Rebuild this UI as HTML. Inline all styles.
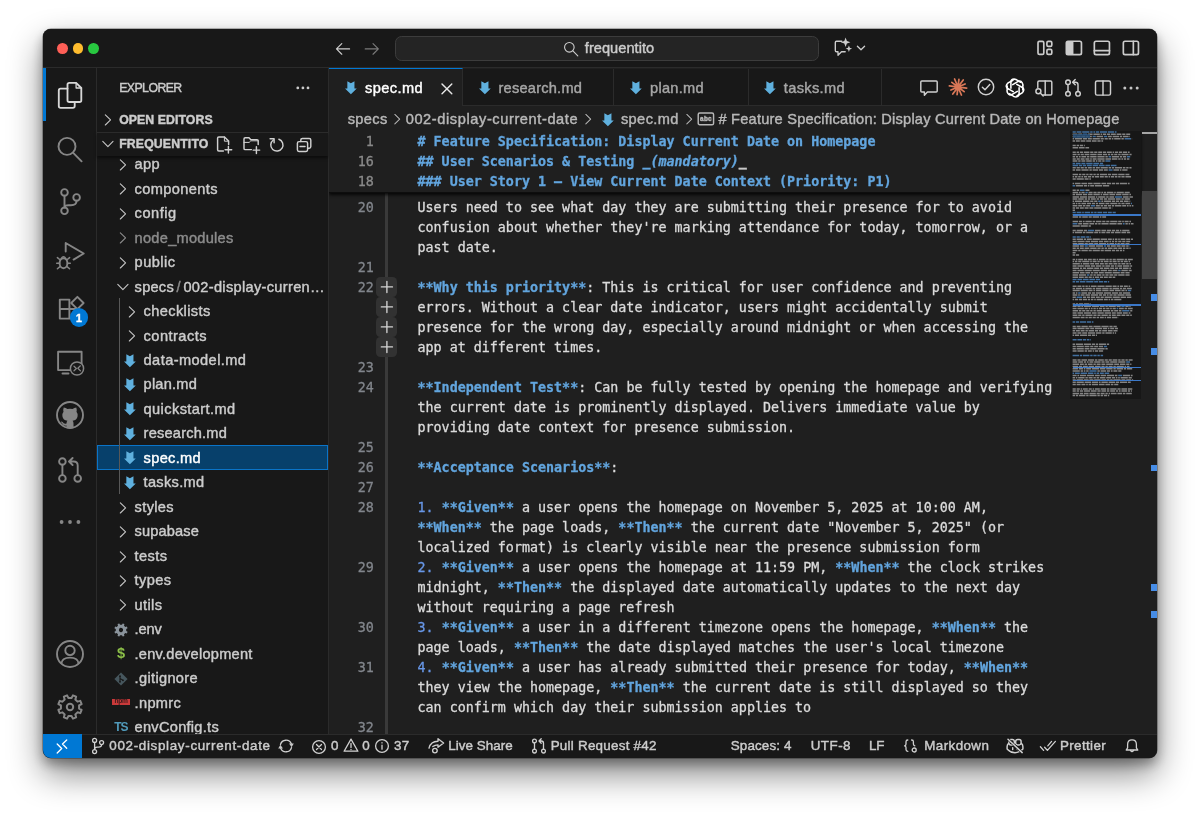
<!DOCTYPE html>
<html lang="en">
<head>
<meta charset="utf-8">
<title>spec.md — frequentito</title>
<style>
*{box-sizing:border-box;margin:0;padding:0}
html,body{width:1200px;height:816px;overflow:hidden;background:#fff}
body{font-family:"Liberation Sans",sans-serif;color:#ccc;position:relative}
#win{will-change:transform;position:absolute;left:43px;top:29px;width:1113.7px;height:729.4px;background:#1f1f1f;border-radius:8px;overflow:hidden;
  box-shadow:0 0 0 .5px rgba(0,0,0,.5),0 16px 34px rgba(0,0,0,.48),0 6px 12px rgba(0,0,0,.33)}
.t{position:absolute;white-space:pre;color:#ccc;-webkit-text-stroke:.42px}
.bx{position:absolute}
.ic{position:absolute;overflow:visible}
.m{font-family:"DejaVu Sans Mono","Liberation Mono",monospace;-webkit-text-stroke:.3px}
.clip{position:absolute;overflow:hidden}
b{font-weight:bold}
.hb{color:#62a5de;font-weight:bold}
.hbi{color:#62a5de;font-weight:bold;font-style:italic}
.nm{color:#6796e6}
.hu{color:#c8c8c8;font-weight:bold}

</style>
</head>
<body>
<div id="win">
<div class="bx" style="left:0.00px;top:0.00px;width:1113.70px;height:38.50px;background:#181818;border-bottom:1px solid #2b2b2b"></div>
<div class="bx" style="left:14.10px;top:14.30px;width:10.80px;height:10.80px;background:#fe5f57;border-radius:50%"></div>
<div class="bx" style="left:29.60px;top:14.30px;width:10.80px;height:10.80px;background:#febc2e;border-radius:50%"></div>
<div class="bx" style="left:45.20px;top:14.30px;width:10.80px;height:10.80px;background:#28c840;border-radius:50%"></div>
<svg class="ic" style="left:290.60px;top:10.80px" width="17.8" height="17.8" viewBox="0 0 16 16" fill="none" stroke="#ccc" stroke-width="1.05" stroke-linecap="round" stroke-linejoin="round"><path d="M14 8 H2.4 M7 3.2 L2.2 8 L7 12.8"/></svg>
<svg class="ic" style="left:319.80px;top:10.80px" width="17.8" height="17.8" viewBox="0 0 16 16" fill="none" stroke="#7a7a7a" stroke-width="1.05" stroke-linecap="round" stroke-linejoin="round"><path d="M2 8 H13.6 M9 3.2 L13.8 8 L9 12.8"/></svg>
<div class="bx" style="left:352.00px;top:6.70px;width:424.30px;height:25.60px;background:#242424;border:1px solid #3c3c3c;border-radius:6.5px"></div>
<svg class="ic" style="left:519.30px;top:10.60px" width="17.8" height="17.8" viewBox="0 0 16 16" fill="none" stroke="#ccc" stroke-width="1.0" stroke-linecap="round" stroke-linejoin="round"><circle cx="6.6" cy="6.6" r="4.3"/><path d="M9.8 9.8 L14.2 14.2"/></svg>
<span class="t" style="left:541.80px;top:9.03px;font-size:14.6px;line-height:20px;height:20px;letter-spacing:0.040px;color:#ccc;">frequentito</span>
<svg class="ic" style="left:780.20px;top:-0.70px" width="40" height="40" viewBox="-20 -20 40 40" fill="none" stroke="#ccc" stroke-width="1.35" stroke-linecap="round" stroke-linejoin="round"><path d="M-1.2 -6.8 H-6.5 Q-7.7 -6.8 -7.7 -5.6 V2.5 Q-7.7 3.7 -6.5 3.7 H-5 V7.2 L-1.5 3.7 H2.2"/><path stroke="none" fill="#ccc" d="M2.6 -10.6 L3.9 -7.1 L7.4 -5.8 L3.9 -4.5 L2.6 -1 L1.3 -4.5 L-2.2 -5.8 L1.3 -7.1 Z"/><path stroke="none" fill="#ccc" d="M5.9 -2.5 L6.8 -0.2 L9.1 0.7 L6.8 1.6 L5.9 3.9 L5 1.6 L2.7 0.7 L5 -0.2 Z"/></svg>
<svg class="ic" style="left:797.70px;top:-0.60px" width="40" height="40" viewBox="-20 -20 40 40" fill="none" stroke="#ccc" stroke-width="1.3" stroke-linecap="round" stroke-linejoin="round"><path d="M-3.6 -1.8 L0 1.8 L3.6 -1.8"/></svg>
<svg class="ic" style="left:992.90px;top:10.10px" width="17.8" height="17.8" viewBox="0 0 16 16" fill="none" stroke="#ccc" stroke-width="1.5" stroke-linecap="round" stroke-linejoin="round"><rect x="1.8" y="2.2" width="5.2" height="11.6" rx="1.2"/><rect x="9.8" y="2.2" width="4.4" height="4.4" rx="1.2"/><rect x="9.8" y="9.4" width="4.4" height="4.4" rx="1.2"/></svg>
<svg class="ic" style="left:1021.50px;top:10.10px" width="17.8" height="17.8" viewBox="0 0 16 16" fill="none" stroke="#ccc" stroke-width="1.5" stroke-linecap="round" stroke-linejoin="round"><rect x="1.2" y="2" width="13.6" height="12" rx="1.5"/><path stroke="none" fill="#ccc" d="M1.2 3.5 Q1.2 2 2.7 2 H7.6 V14 H2.7 Q1.2 14 1.2 12.5 Z"/></svg>
<svg class="ic" style="left:1050.30px;top:10.10px" width="17.8" height="17.8" viewBox="0 0 16 16" fill="none" stroke="#ccc" stroke-width="1.5" stroke-linecap="round" stroke-linejoin="round"><rect x="1.2" y="2" width="13.6" height="12" rx="1.5"/><path d="M1.2 10.5 H14.8"/></svg>
<svg class="ic" style="left:1079.00px;top:10.10px" width="17.8" height="17.8" viewBox="0 0 16 16" fill="none" stroke="#ccc" stroke-width="1.5" stroke-linecap="round" stroke-linejoin="round"><rect x="1.2" y="2" width="13.6" height="12" rx="1.5"/><path d="M10.2 2 V14"/></svg>
<div class="bx" style="left:0.00px;top:38.50px;width:53.80px;height:667.00px;background:#181818;border-right:1px solid #2b2b2b"></div>
<div class="bx" style="left:0.00px;top:39.00px;width:3.20px;height:53.30px;background:#0078d4"></div>
<svg class="ic" style="left:6.50px;top:45.70px" width="40" height="40" viewBox="-20 -20 40 40" fill="none" stroke="#d7d7d7" stroke-width="1.85" stroke-linecap="round" stroke-linejoin="round"><path d="M-2.5 -10.4 Q-2.5 -12.2 -0.7 -12.2 H6.1 L11.3 -7 V5.2 Q11.3 7 9.5 7 H-0.7 Q-2.5 7 -2.5 5.2 Z"/><path d="M6.1 -12.2 V-7 H11.3" stroke-width="1.3"/><path d="M-2.5 -6.4 H-9.4 Q-11.2 -6.4 -11.2 -4.6 V11 Q-11.2 12.8 -9.4 12.8 H2.9 Q4.7 12.8 4.7 11 V7"/></svg><svg class="ic" style="left:6.80px;top:99.50px" width="40" height="40" viewBox="-20 -20 40 40" fill="none" stroke="#868686" stroke-width="1.9" stroke-linecap="round" stroke-linejoin="round"><circle cx="-3" cy="-2.6" r="8.5"/><path d="M3.2 3.8 L11.6 12.3"/></svg><svg class="ic" style="left:6.80px;top:153.00px" width="40" height="40" viewBox="-20 -20 40 40" fill="none" stroke="#868686" stroke-width="1.9" stroke-linecap="round" stroke-linejoin="round"><circle cx="-5.5" cy="-9.6" r="3.3"/><circle cx="6.6" cy="-4.6" r="3.3"/><circle cx="-5.5" cy="8.8" r="3.3"/><path d="M-5.5 -6.3 V5.5 M6.6 -1.3 Q6.6 3.2 1 3.2 H-1.5 Q-5.5 3.2 -5.5 5.5"/></svg><svg class="ic" style="left:6.60px;top:206.50px" width="40" height="40" viewBox="-20 -20 40 40" fill="none" stroke="#868686" stroke-width="1.9" stroke-linecap="round" stroke-linejoin="round"><path d="M-4.3 -4.5 V-13 L13.7 -2.5 L3.6 3.6"/><ellipse cx="-6.5" cy="7.2" rx="3.9" ry="5"/><path d="M-10.4 7.2 H-13.3 M-2.6 7.2 H0.3 M-10 3.8 L-12.6 1.6 M-3 3.8 L-0.4 1.6 M-10 10.6 L-12.6 12.8 M-3 10.6 L-0.4 12.8 M-8.8 2.6 Q-6.5 -1 -4.2 2.6" stroke-width="1.5"/></svg><svg class="ic" style="left:6.60px;top:259.70px" width="40" height="40" viewBox="-20 -20 40 40" fill="none" stroke="#868686" stroke-width="1.9" stroke-linecap="round" stroke-linejoin="round"><path d="M-10.2 -9.4 H-0.6 V9.6 H-10.2 Z M-10.2 0 H-0.6 M-0.6 0 H9 V9.6 H-0.6"/><path d="M7.4 -12.2 L13.6 -6 L7.4 0.2 L1.2 -6 Z"/></svg><div class="bx" style="left:26.70px;top:279.40px;width:18.40px;height:18.40px;background:#0078d4;border-radius:50%"></div><span class="t" style="left:33.00px;top:282.82px;font-size:10.6px;line-height:12px;height:12px;font-weight:bold;color:#fff;">1</span><svg class="ic" style="left:6.60px;top:313.00px" width="40" height="40" viewBox="-20 -20 40 40" fill="none" stroke="#868686" stroke-width="1.9" stroke-linecap="round" stroke-linejoin="round"><path d="M-11.9 -10.3 H11.6 V8.1 H-11.9 Z M-7.5 11.5 H-1.5"/><circle cx="7" cy="6.5" r="6.6" fill="#181818" stroke-width="1.5"/><path d="M4 4.2 L6.4 6.5 L4 8.8 M10.4 3.8 L7.8 6.3 L10.4 8.8" stroke-width="1.2"/></svg><svg class="ic" style="left:7.00px;top:366.10px" width="40" height="40" viewBox="-20 -20 40 40" fill="none" stroke="#868686" stroke-width="1.9" stroke-linecap="round" stroke-linejoin="round"><circle cx="0" cy="0" r="13"/><path stroke="none" fill="#868686" d="M-6.3 -7.6 Q-4.2 -7.4 -2.6 -5.9 Q0 -6.5 2.6 -5.9 Q4.2 -7.4 6.3 -7.6 Q7.1 -5.2 6.5 -3.3 Q8 -1.4 7.6 1.2 Q6.9 5.2 2.6 5.7 Q3.6 6.8 3.5 8.6 V13.2 Q0 14 -3.5 13.2 V10.6 Q-6.6 11.3 -7.8 8.6 Q-8.4 7.3 -9.4 6.9 Q-8.6 6.3 -7.4 7 Q-6 9.3 -3.5 8.4 Q-3.4 6.6 -2.6 5.7 Q-6.9 5.2 -7.6 1.2 Q-8 -1.4 -6.5 -3.3 Q-7.1 -5.2 -6.3 -7.6 Z"/></svg><svg class="ic" style="left:6.80px;top:421.00px" width="40" height="40" viewBox="-20 -20 40 40" fill="none" stroke="#868686" stroke-width="1.9" stroke-linecap="round" stroke-linejoin="round"><circle cx="-7.6" cy="-8.5" r="3.3"/><circle cx="-7.6" cy="8.4" r="3.3"/><circle cx="7.7" cy="8.4" r="3.3"/><path d="M-7.6 -5.2 V5.1 M7.7 5.1 V-4.5 Q7.7 -8.5 3.7 -8.5 H-0.8 M2.6 -12 L-1 -8.5 L2.6 -5"/></svg><svg class="ic" style="left:7.00px;top:473.00px" width="40" height="40" viewBox="-20 -20 40 40" fill="none" stroke="#868686" stroke-width="1.9" stroke-linecap="round" stroke-linejoin="round"><g stroke="none" fill="#868686"><circle cx="-8.4" cy="0" r="1.9"/><circle cx="0" cy="0" r="1.9"/><circle cx="8.4" cy="0" r="1.9"/></g></svg><svg class="ic" style="left:7.00px;top:604.60px" width="40" height="40" viewBox="-20 -20 40 40" fill="none" stroke="#868686" stroke-width="1.9" stroke-linecap="round" stroke-linejoin="round"><circle cx="0" cy="0" r="13"/><circle cx="0" cy="-3.6" r="4.7"/><path d="M-8.6 9.4 Q-8 3.6 0 3.6 Q8 3.6 8.6 9.4"/></svg><svg class="ic" style="left:6.70px;top:657.90px" width="40" height="40" viewBox="-20 -20 40 40" fill="none" stroke="#868686" stroke-width="2.0" stroke-linecap="round" stroke-linejoin="round"><path d="M8.97 -2.06 L11.87 -1.73 L11.87 1.73 L8.97 2.06 L7.80 4.88 L9.62 7.17 L7.17 9.62 L4.88 7.80 L2.06 8.97 L1.73 11.87 L-1.73 11.87 L-2.06 8.97 L-4.88 7.80 L-7.17 9.62 L-9.62 7.17 L-7.80 4.88 L-8.97 2.06 L-11.87 1.73 L-11.87 -1.73 L-8.97 -2.06 L-7.80 -4.88 L-9.62 -7.17 L-7.17 -9.62 L-4.88 -7.80 L-2.06 -8.97 L-1.73 -11.87 L1.73 -11.87 L2.06 -8.97 L4.88 -7.80 L7.17 -9.62 L9.62 -7.17 L7.80 -4.88 Z" transform="rotate(22.5)"/><circle cx="0" cy="0" r="3.2"/></svg>
<div class="bx" style="left:286.00px;top:39.50px;width:827.70px;height:37.80px;background:#181818;border-bottom:1px solid #2b2b2b"></div>
<div class="bx" style="left:286.00px;top:38.60px;width:134.00px;height:38.90px;background:#1f1f1f;border-top:1.4px solid #0078d4;border-right:1px solid #2b2b2b"></div>
<div class="bx" style="left:570.30px;top:39.50px;width:1.00px;height:37.00px;background:#2b2b2b"></div>
<div class="bx" style="left:704.90px;top:39.50px;width:1.00px;height:37.00px;background:#2b2b2b"></div>
<div class="bx" style="left:837.70px;top:39.50px;width:1.00px;height:37.00px;background:#2b2b2b"></div>
<svg class="ic" style="left:299.40px;top:50.00px" width="17.8" height="17.8" viewBox="0 0 16 16" fill="none" stroke="#ccc" stroke-width="1.0" stroke-linecap="round" stroke-linejoin="round"><path stroke="none" fill="#5fb0de" d="M4.8 2.1 L8 3.8 L11.2 2.1 V8.6 H13.3 L8 13.8 L2.7 8.6 H4.8 Z"/></svg>
<span class="t" style="left:322.00px;top:48.93px;font-size:14.6px;line-height:20px;height:20px;letter-spacing:0.407px;color:#fff;">spec.md</span>
<svg class="ic" style="left:395.20px;top:50.70px" width="17.8" height="17.8" viewBox="0 0 16 16" fill="none" stroke="#e6e6e6" stroke-width="1.3" stroke-linecap="round" stroke-linejoin="round"><path d="M3.6 3.6 L12.4 12.4 M12.4 3.6 L3.6 12.4"/></svg>
<svg class="ic" style="left:433.20px;top:50.00px" width="17.8" height="17.8" viewBox="0 0 16 16" fill="none" stroke="#ccc" stroke-width="1.0" stroke-linecap="round" stroke-linejoin="round"><path stroke="none" fill="#5fb0de" d="M4.8 2.1 L8 3.8 L11.2 2.1 V8.6 H13.3 L8 13.8 L2.7 8.6 H4.8 Z"/></svg>
<span class="t" style="left:455.50px;top:48.93px;font-size:14.6px;line-height:20px;height:20px;letter-spacing:0.227px;color:#a6a6a6;">research.md</span>
<svg class="ic" style="left:584.40px;top:50.00px" width="17.8" height="17.8" viewBox="0 0 16 16" fill="none" stroke="#ccc" stroke-width="1.0" stroke-linecap="round" stroke-linejoin="round"><path stroke="none" fill="#5fb0de" d="M4.8 2.1 L8 3.8 L11.2 2.1 V8.6 H13.3 L8 13.8 L2.7 8.6 H4.8 Z"/></svg>
<span class="t" style="left:607.00px;top:48.93px;font-size:14.6px;line-height:20px;height:20px;letter-spacing:0.283px;color:#a6a6a6;">plan.md</span>
<svg class="ic" style="left:718.30px;top:50.00px" width="17.8" height="17.8" viewBox="0 0 16 16" fill="none" stroke="#ccc" stroke-width="1.0" stroke-linecap="round" stroke-linejoin="round"><path stroke="none" fill="#5fb0de" d="M4.8 2.1 L8 3.8 L11.2 2.1 V8.6 H13.3 L8 13.8 L2.7 8.6 H4.8 Z"/></svg>
<span class="t" style="left:740.80px;top:48.93px;font-size:14.6px;line-height:20px;height:20px;letter-spacing:0.351px;color:#a6a6a6;">tasks.md</span>
<svg class="ic" style="left:865.70px;top:39.00px" width="40" height="40" viewBox="-20 -20 40 40" fill="none" stroke="#d0d0d0" stroke-width="1.45" stroke-linecap="round" stroke-linejoin="round"><path d="M-8.2 -6 Q-8.2 -7 -7.2 -7 H7.2 Q8.2 -7 8.2 -6 V3 Q8.2 4 7.2 4 H-1.6 L-4.6 7.2 V4 H-7.2 Q-8.2 4 -8.2 3 Z"/></svg><svg class="ic" style="left:895.00px;top:38.20px" width="40" height="40" viewBox="-20 -20 40 40" fill="none" stroke="#d97757" stroke-width="1.75" stroke-linecap="round" stroke-linejoin="round"><path d="M1.19 0.14 L8.64 1.04 M0.96 0.72 L6.16 4.62 M0.47 1.10 L3.42 8.00 M-0.14 1.19 L-0.92 7.64 M-0.72 0.96 L-5.22 6.96 M-1.10 0.47 L-7.08 3.02 M-1.19 -0.14 L-8.64 -1.04 M-0.96 -0.72 L-6.16 -4.62 M-0.47 -1.10 L-3.42 -8.00 M0.14 -1.19 L0.92 -7.64 M0.72 -0.96 L5.22 -6.96 M1.10 -0.47 L7.08 -3.02 "/><circle cx="0" cy="0" r="2.2" fill="#d97757" stroke="none"/></svg><svg class="ic" style="left:923.30px;top:38.30px" width="40" height="40" viewBox="-20 -20 40 40" fill="none" stroke="#d0d0d0" stroke-width="1.45" stroke-linecap="round" stroke-linejoin="round"><circle cx="0" cy="0" r="7.7"/><path d="M-3.6 0.2 L-1 2.8 L3.8 -2.4"/></svg><svg class="ic" style="left:952.40px;top:38.50px" width="40" height="40" viewBox="-20 -20 40 40" fill="none" stroke="#fff" stroke-width="1.55" stroke-linecap="round" stroke-linejoin="round"><path transform="rotate(0)" d="M-4.1 0.3 V-5.6 Q-4.1 -8.9 -0.9 -8.9 Q1.2 -8.9 2.6 -7.5 L5.7 -5.7"/><path transform="rotate(60)" d="M-4.1 0.3 V-5.6 Q-4.1 -8.9 -0.9 -8.9 Q1.2 -8.9 2.6 -7.5 L5.7 -5.7"/><path transform="rotate(120)" d="M-4.1 0.3 V-5.6 Q-4.1 -8.9 -0.9 -8.9 Q1.2 -8.9 2.6 -7.5 L5.7 -5.7"/><path transform="rotate(180)" d="M-4.1 0.3 V-5.6 Q-4.1 -8.9 -0.9 -8.9 Q1.2 -8.9 2.6 -7.5 L5.7 -5.7"/><path transform="rotate(240)" d="M-4.1 0.3 V-5.6 Q-4.1 -8.9 -0.9 -8.9 Q1.2 -8.9 2.6 -7.5 L5.7 -5.7"/><path transform="rotate(300)" d="M-4.1 0.3 V-5.6 Q-4.1 -8.9 -0.9 -8.9 Q1.2 -8.9 2.6 -7.5 L5.7 -5.7"/></svg><svg class="ic" style="left:981.30px;top:39.00px" width="40" height="40" viewBox="-20 -20 40 40" fill="none" stroke="#d0d0d0" stroke-width="1.45" stroke-linecap="round" stroke-linejoin="round"><path d="M-6.2 -0.4 V-5.8 Q-6.2 -7 -5 -7 H6.6 Q7.8 -7 7.8 -5.8 V5.8 Q7.8 7 6.6 7 H-1.2"/><path d="M1.2 -7 V7"/><circle cx="-5.6" cy="3.2" r="2.5"/><path d="M-3.8 5 L-0.8 8"/></svg><svg class="ic" style="left:1010.00px;top:38.80px" width="40" height="40" viewBox="-20 -20 40 40" fill="none" stroke="#d0d0d0" stroke-width="1.45" stroke-linecap="round" stroke-linejoin="round"><circle cx="-5" cy="-5.8" r="2.3"/><circle cx="-5" cy="5.8" r="2.3"/><circle cx="5" cy="5.8" r="2.3"/><path d="M-5 -3.5 V3.5 M5 3.5 V-3.2 Q5 -5.8 2.4 -5.8 H0 M2.2 -8.4 L-0.4 -5.8 L2.2 -3.2"/></svg><svg class="ic" style="left:1040.00px;top:39.20px" width="40" height="40" viewBox="-20 -20 40 40" fill="none" stroke="#d0d0d0" stroke-width="1.45" stroke-linecap="round" stroke-linejoin="round"><rect x="-7.5" y="-7.1" width="15" height="14.2" rx="1.6"/><path d="M0 -7.1 V7.1"/></svg><svg class="ic" style="left:1068.30px;top:38.60px" width="40" height="40" viewBox="-20 -20 40 40" fill="none" stroke="#868686" stroke-width="1.9" stroke-linecap="round" stroke-linejoin="round"><g stroke="none" fill="#c5c5c5"><circle cx="-6.2" cy="0" r="1.5"/><circle cx="0" cy="0" r="1.5"/><circle cx="6.2" cy="0" r="1.5"/></g></svg>
<span class="t" style="left:304.70px;top:80.13px;font-size:14.6px;line-height:20px;height:20px;letter-spacing:0.375px;color:#b8b8b8;">specs</span>
<svg class="ic" style="left:345.70px;top:81.90px" width="16.4" height="16.4" viewBox="0 0 16 16" fill="none" stroke="#b8b8b8" stroke-width="1.0" stroke-linecap="round" stroke-linejoin="round"><path d="M5.7 3.4 L10.4 8 L5.7 12.6"/></svg>
<span class="t" style="left:362.70px;top:80.13px;font-size:14.6px;line-height:20px;height:20px;letter-spacing:0.597px;color:#b8b8b8;">002-display-current-date</span>
<svg class="ic" style="left:537.00px;top:81.90px" width="16.4" height="16.4" viewBox="0 0 16 16" fill="none" stroke="#b8b8b8" stroke-width="1.0" stroke-linecap="round" stroke-linejoin="round"><path d="M5.7 3.4 L10.4 8 L5.7 12.6"/></svg>
<svg class="ic" style="left:555.50px;top:81.60px" width="17.8" height="17.8" viewBox="0 0 16 16" fill="none" stroke="#ccc" stroke-width="1.0" stroke-linecap="round" stroke-linejoin="round"><path stroke="none" fill="#5fb0de" d="M4.8 2.1 L8 3.8 L11.2 2.1 V8.6 H13.3 L8 13.8 L2.7 8.6 H4.8 Z"/></svg>
<span class="t" style="left:577.90px;top:80.13px;font-size:14.6px;line-height:20px;height:20px;letter-spacing:0.407px;color:#b8b8b8;">spec.md</span>
<svg class="ic" style="left:637.60px;top:81.90px" width="16.4" height="16.4" viewBox="0 0 16 16" fill="none" stroke="#b8b8b8" stroke-width="1.0" stroke-linecap="round" stroke-linejoin="round"><path d="M5.7 3.4 L10.4 8 L5.7 12.6"/></svg>
<svg class="ic" style="left:654.10px;top:81.30px" width="17.8" height="17.8" viewBox="0 0 16 16" fill="none" stroke="#b8b8b8" stroke-width="1.3" stroke-linecap="round" stroke-linejoin="round"><rect x="1.1" y="2.7" width="13.8" height="10.6" rx="1.4"/></svg>
<span class="t" style="left:657.10px;top:84.54px;font-size:6.4px;line-height:10px;height:10px;letter-spacing:0.263px;font-weight:bold;color:#b8b8b8;">abc</span>
<span class="t" style="left:675.50px;top:80.13px;font-size:14.6px;line-height:20px;height:20px;letter-spacing:0.218px;color:#b8b8b8;"># Feature Specification: Display Current Date on Homepage</span>
<div class="bx" style="left:53.80px;top:38.50px;width:232.20px;height:667.00px;background:#181818;border-right:1px solid #2b2b2b"></div>
<span class="t" style="left:76.20px;top:49.14px;font-size:12.3px;line-height:20px;height:20px;letter-spacing:-0.559px;color:#ccc;">EXPLORER</span>
<svg class="ic" style="left:251.40px;top:50.10px" width="17.8" height="17.8" viewBox="0 0 16 16" fill="none" stroke="#ccc" stroke-width="1.0" stroke-linecap="round" stroke-linejoin="round"><g stroke="none" fill="#ccc"><circle cx="3.4" cy="8" r="1.25"/><circle cx="8" cy="8" r="1.25"/><circle cx="12.6" cy="8" r="1.25"/></g></svg>
<div class="clip" style="left:53.70px;top:127.30px;width:232.30px;height:578.20px"><div class="bx" style="left:0.20px;top:288.94px;width:231.40px;height:24.47px;background:#07406b;border:1px solid #0a74c8"></div><div class="bx" style="left:22.60px;top:142.02px;width:1.00px;height:195.76px;background:#585858"></div><svg class="ic" style="left:17.20px;top:-0.30px" width="17.8" height="17.8" viewBox="0 0 16 16" fill="none" stroke="#c5c5c5" stroke-width="1.0" stroke-linecap="round" stroke-linejoin="round"><path d="M5.7 3.4 L10.4 8 L5.7 12.6"/></svg><span class="t" style="left:37.90px;top:-4.07px;font-size:14.6px;line-height:24px;height:24px;letter-spacing:0.400px;color:#ccc;">app</span><svg class="ic" style="left:17.20px;top:24.17px" width="17.8" height="17.8" viewBox="0 0 16 16" fill="none" stroke="#c5c5c5" stroke-width="1.0" stroke-linecap="round" stroke-linejoin="round"><path d="M5.7 3.4 L10.4 8 L5.7 12.6"/></svg><span class="t" style="left:37.90px;top:20.40px;font-size:14.6px;line-height:24px;height:24px;letter-spacing:0.390px;color:#ccc;">components</span><svg class="ic" style="left:17.20px;top:48.64px" width="17.8" height="17.8" viewBox="0 0 16 16" fill="none" stroke="#c5c5c5" stroke-width="1.0" stroke-linecap="round" stroke-linejoin="round"><path d="M5.7 3.4 L10.4 8 L5.7 12.6"/></svg><span class="t" style="left:37.90px;top:44.87px;font-size:14.6px;line-height:24px;height:24px;letter-spacing:0.510px;color:#ccc;">config</span><svg class="ic" style="left:17.20px;top:73.11px" width="17.8" height="17.8" viewBox="0 0 16 16" fill="none" stroke="#8c8c8c" stroke-width="1.0" stroke-linecap="round" stroke-linejoin="round"><path d="M5.7 3.4 L10.4 8 L5.7 12.6"/></svg><span class="t" style="left:37.90px;top:69.34px;font-size:14.6px;line-height:24px;height:24px;letter-spacing:0.271px;color:#8c8c8c;">node_modules</span><svg class="ic" style="left:17.20px;top:97.58px" width="17.8" height="17.8" viewBox="0 0 16 16" fill="none" stroke="#c5c5c5" stroke-width="1.0" stroke-linecap="round" stroke-linejoin="round"><path d="M5.7 3.4 L10.4 8 L5.7 12.6"/></svg><span class="t" style="left:37.90px;top:93.81px;font-size:14.6px;line-height:24px;height:24px;letter-spacing:0.445px;color:#ccc;">public</span><svg class="ic" style="left:17.20px;top:122.05px" width="17.8" height="17.8" viewBox="0 0 16 16" fill="none" stroke="#c5c5c5" stroke-width="1.0" stroke-linecap="round" stroke-linejoin="round"><path d="M3.4 5.7 L8 10.4 L12.6 5.7"/></svg><span class="t" style="left:37.90px;top:118.28px;font-size:14.6px;line-height:24px;height:24px;letter-spacing:0.255px;color:#ccc;">specs</span><span class="t" style="left:79.90px;top:118.28px;font-size:14.6px;line-height:24px;height:24px;color:#8a8a8a;">/</span><span class="t" style="left:86.70px;top:118.28px;font-size:14.6px;line-height:24px;height:24px;letter-spacing:0.323px;color:#ccc;">002-display-curren…</span><svg class="ic" style="left:26.20px;top:146.52px" width="17.8" height="17.8" viewBox="0 0 16 16" fill="none" stroke="#c5c5c5" stroke-width="1.0" stroke-linecap="round" stroke-linejoin="round"><path d="M5.7 3.4 L10.4 8 L5.7 12.6"/></svg><span class="t" style="left:46.90px;top:142.75px;font-size:14.6px;line-height:24px;height:24px;letter-spacing:0.374px;color:#ccc;">checklists</span><svg class="ic" style="left:26.20px;top:170.99px" width="17.8" height="17.8" viewBox="0 0 16 16" fill="none" stroke="#c5c5c5" stroke-width="1.0" stroke-linecap="round" stroke-linejoin="round"><path d="M5.7 3.4 L10.4 8 L5.7 12.6"/></svg><span class="t" style="left:46.90px;top:167.22px;font-size:14.6px;line-height:24px;height:24px;letter-spacing:0.466px;color:#ccc;">contracts</span><svg class="ic" style="left:24.00px;top:195.26px" width="17.8" height="17.8" viewBox="0 0 16 16" fill="none" stroke="#ccc" stroke-width="1.0" stroke-linecap="round" stroke-linejoin="round"><path stroke="none" fill="#5fb0de" d="M4.8 2.1 L8 3.8 L11.2 2.1 V8.6 H13.3 L8 13.8 L2.7 8.6 H4.8 Z"/></svg><span class="t" style="left:46.90px;top:191.69px;font-size:14.6px;line-height:24px;height:24px;letter-spacing:0.420px;color:#ccc;">data-model.md</span><svg class="ic" style="left:24.00px;top:219.73px" width="17.8" height="17.8" viewBox="0 0 16 16" fill="none" stroke="#ccc" stroke-width="1.0" stroke-linecap="round" stroke-linejoin="round"><path stroke="none" fill="#5fb0de" d="M4.8 2.1 L8 3.8 L11.2 2.1 V8.6 H13.3 L8 13.8 L2.7 8.6 H4.8 Z"/></svg><span class="t" style="left:46.90px;top:216.16px;font-size:14.6px;line-height:24px;height:24px;letter-spacing:0.212px;color:#ccc;">plan.md</span><svg class="ic" style="left:24.00px;top:244.20px" width="17.8" height="17.8" viewBox="0 0 16 16" fill="none" stroke="#ccc" stroke-width="1.0" stroke-linecap="round" stroke-linejoin="round"><path stroke="none" fill="#5fb0de" d="M4.8 2.1 L8 3.8 L11.2 2.1 V8.6 H13.3 L8 13.8 L2.7 8.6 H4.8 Z"/></svg><span class="t" style="left:46.90px;top:240.63px;font-size:14.6px;line-height:24px;height:24px;letter-spacing:0.402px;color:#ccc;">quickstart.md</span><svg class="ic" style="left:24.00px;top:268.67px" width="17.8" height="17.8" viewBox="0 0 16 16" fill="none" stroke="#ccc" stroke-width="1.0" stroke-linecap="round" stroke-linejoin="round"><path stroke="none" fill="#5fb0de" d="M4.8 2.1 L8 3.8 L11.2 2.1 V8.6 H13.3 L8 13.8 L2.7 8.6 H4.8 Z"/></svg><span class="t" style="left:46.90px;top:265.10px;font-size:14.6px;line-height:24px;height:24px;letter-spacing:0.209px;color:#ccc;">research.md</span><svg class="ic" style="left:24.00px;top:293.14px" width="17.8" height="17.8" viewBox="0 0 16 16" fill="none" stroke="#ccc" stroke-width="1.0" stroke-linecap="round" stroke-linejoin="round"><path stroke="none" fill="#5fb0de" d="M4.8 2.1 L8 3.8 L11.2 2.1 V8.6 H13.3 L8 13.8 L2.7 8.6 H4.8 Z"/></svg><span class="t" style="left:46.90px;top:289.57px;font-size:14.6px;line-height:24px;height:24px;letter-spacing:0.321px;color:#fff;">spec.md</span><svg class="ic" style="left:24.00px;top:317.61px" width="17.8" height="17.8" viewBox="0 0 16 16" fill="none" stroke="#ccc" stroke-width="1.0" stroke-linecap="round" stroke-linejoin="round"><path stroke="none" fill="#5fb0de" d="M4.8 2.1 L8 3.8 L11.2 2.1 V8.6 H13.3 L8 13.8 L2.7 8.6 H4.8 Z"/></svg><span class="t" style="left:46.90px;top:314.04px;font-size:14.6px;line-height:24px;height:24px;letter-spacing:0.301px;color:#ccc;">tasks.md</span><svg class="ic" style="left:17.20px;top:342.28px" width="17.8" height="17.8" viewBox="0 0 16 16" fill="none" stroke="#c5c5c5" stroke-width="1.0" stroke-linecap="round" stroke-linejoin="round"><path d="M5.7 3.4 L10.4 8 L5.7 12.6"/></svg><span class="t" style="left:37.90px;top:338.51px;font-size:14.6px;line-height:24px;height:24px;letter-spacing:0.349px;color:#ccc;">styles</span><svg class="ic" style="left:17.20px;top:366.75px" width="17.8" height="17.8" viewBox="0 0 16 16" fill="none" stroke="#c5c5c5" stroke-width="1.0" stroke-linecap="round" stroke-linejoin="round"><path d="M5.7 3.4 L10.4 8 L5.7 12.6"/></svg><span class="t" style="left:37.90px;top:362.98px;font-size:14.6px;line-height:24px;height:24px;letter-spacing:0.139px;color:#ccc;">supabase</span><svg class="ic" style="left:17.20px;top:391.22px" width="17.8" height="17.8" viewBox="0 0 16 16" fill="none" stroke="#c5c5c5" stroke-width="1.0" stroke-linecap="round" stroke-linejoin="round"><path d="M5.7 3.4 L10.4 8 L5.7 12.6"/></svg><span class="t" style="left:37.90px;top:387.45px;font-size:14.6px;line-height:24px;height:24px;letter-spacing:0.396px;color:#ccc;">tests</span><svg class="ic" style="left:17.20px;top:415.69px" width="17.8" height="17.8" viewBox="0 0 16 16" fill="none" stroke="#c5c5c5" stroke-width="1.0" stroke-linecap="round" stroke-linejoin="round"><path d="M5.7 3.4 L10.4 8 L5.7 12.6"/></svg><span class="t" style="left:37.90px;top:411.92px;font-size:14.6px;line-height:24px;height:24px;letter-spacing:0.424px;color:#ccc;">types</span><svg class="ic" style="left:17.20px;top:440.16px" width="17.8" height="17.8" viewBox="0 0 16 16" fill="none" stroke="#c5c5c5" stroke-width="1.0" stroke-linecap="round" stroke-linejoin="round"><path d="M5.7 3.4 L10.4 8 L5.7 12.6"/></svg><span class="t" style="left:37.90px;top:436.39px;font-size:14.6px;line-height:24px;height:24px;letter-spacing:0.370px;color:#ccc;">utils</span><svg class="ic" style="left:4.00px;top:453.43px" width="40" height="40" viewBox="-20 -20 40 40" fill="none" stroke="#8a939b" stroke-width="1.9" stroke-linecap="round" stroke-linejoin="round"><path stroke="none" fill="#8a939b" fill-rule="evenodd" d="M5.18 -1.12 L6.74 -0.91 L6.74 0.91 L5.18 1.12 L4.45 2.87 L5.41 4.13 L4.13 5.41 L2.87 4.45 L1.12 5.18 L0.91 6.74 L-0.91 6.74 L-1.12 5.18 L-2.87 4.45 L-4.13 5.41 L-5.41 4.13 L-4.45 2.87 L-5.18 1.12 L-6.74 0.91 L-6.74 -0.91 L-5.18 -1.12 L-4.45 -2.87 L-5.41 -4.13 L-4.13 -5.41 L-2.87 -4.45 L-1.12 -5.18 L-0.91 -6.74 L0.91 -6.74 L1.12 -5.18 L2.87 -4.45 L4.13 -5.41 L5.41 -4.13 L4.45 -2.87 Z M2.1 0 A2.1 2.1 0 1 0 -2.1 0 A2.1 2.1 0 1 0 2.1 0 Z" transform="rotate(22.5)"/></svg><span class="t" style="left:37.90px;top:460.86px;font-size:14.6px;line-height:24px;height:24px;letter-spacing:-0.146px;color:#ccc;">.env</span><span class="t" style="left:20.40px;top:487.04px;font-size:14.5px;line-height:20px;height:20px;font-weight:bold;color:#8dc149;-webkit-text-stroke:0">$</span><span class="t" style="left:37.90px;top:485.33px;font-size:14.6px;line-height:24px;height:24px;letter-spacing:0.242px;color:#ccc;">.env.development</span><svg class="ic" style="left:4.00px;top:502.37px" width="40" height="40" viewBox="-20 -20 40 40" fill="none" stroke="#46565d" stroke-width="1.9" stroke-linecap="round" stroke-linejoin="round"><path stroke="none" fill="#46565d" d="M0 -6.6 L6.6 0 L0 6.6 L-6.6 0 Z"/><path d="M-1 -2.6 L-1 2.6 M-1 -0.6 L1.8 1.2" stroke="#181818" stroke-width="1.1"/><circle cx="-1" cy="-2.8" r="0.9" fill="#181818" stroke="none"/><circle cx="-1" cy="2.8" r="0.9" fill="#181818" stroke="none"/><circle cx="2" cy="1.3" r="0.9" fill="#181818" stroke="none"/></svg><span class="t" style="left:37.90px;top:509.80px;font-size:14.6px;line-height:24px;height:24px;letter-spacing:0.336px;color:#ccc;">.gitignore</span><div class="bx" style="left:15.60px;top:542.24px;width:17.60px;height:6.20px;background:#c9393a"></div><span class="t" style="left:17.80px;top:540.87px;font-size:6.6px;line-height:8px;height:8px;letter-spacing:-0.239px;font-weight:bold;color:#3a1a1a;-webkit-text-stroke:0">npm</span><span class="t" style="left:37.90px;top:534.27px;font-size:14.6px;line-height:24px;height:24px;letter-spacing:0.333px;color:#ccc;">.npmrc</span><span class="t" style="left:17.60px;top:560.85px;font-size:12px;line-height:20px;height:20px;letter-spacing:-1.067px;font-weight:bold;color:#519aba;-webkit-text-stroke:0">TS</span><span class="t" style="left:37.90px;top:558.74px;font-size:14.6px;line-height:24px;height:24px;letter-spacing:0.273px;color:#ccc;">envConfig.ts</span></div>
<div class="bx" style="left:53.70px;top:78.50px;width:231.60px;height:24.50px;background:#181818"></div>
<svg class="ic" style="left:56.40px;top:81.70px" width="17.8" height="17.8" viewBox="0 0 16 16" fill="none" stroke="#c5c5c5" stroke-width="1.0" stroke-linecap="round" stroke-linejoin="round"><path d="M5.7 3.4 L10.4 8 L5.7 12.6"/></svg>
<span class="t" style="left:76.20px;top:80.74px;font-size:12.3px;line-height:20px;height:20px;letter-spacing:0.067px;font-weight:bold;color:#ccc;">OPEN EDITORS</span>
<div class="bx" style="left:53.70px;top:102.80px;width:231.60px;height:24.50px;background:#181818;border-top:1px solid #2b2b2b;box-shadow:0 2px 3px rgba(0,0,0,.55)"></div>
<svg class="ic" style="left:56.40px;top:106.10px" width="17.8" height="17.8" viewBox="0 0 16 16" fill="none" stroke="#c5c5c5" stroke-width="1.0" stroke-linecap="round" stroke-linejoin="round"><path d="M3.4 5.7 L8 10.4 L12.6 5.7"/></svg>
<span class="t" style="left:76.20px;top:105.14px;font-size:12.3px;line-height:20px;height:20px;letter-spacing:0.127px;font-weight:bold;color:#ccc;">FREQUENTITO</span>
<svg class="ic" style="left:160.20px;top:95.30px" width="40" height="40" viewBox="-20 -20 40 40" fill="none" stroke="#d0d0d0" stroke-width="1.45" stroke-linecap="round" stroke-linejoin="round"><path d="M0.4 6.9 H-4.2 Q-5.4 6.9 -5.4 5.7 V-5.9 Q-5.4 -7.1 -4.2 -7.1 H1.5 L5.6 -3 V0.4"/><path d="M1.4 -7 V-2.8 H5.6" stroke-width="1"/><path d="M5.4 2.4 V9 M2.1 5.7 H8.7"/></svg><svg class="ic" style="left:187.70px;top:94.80px" width="40" height="40" viewBox="-20 -20 40 40" fill="none" stroke="#d0d0d0" stroke-width="1.45" stroke-linecap="round" stroke-linejoin="round"><path d="M0.4 5.6 H-5.8 Q-7 5.6 -7 4.4 V-5 Q-7 -6.2 -5.8 -6.2 H-2 L-0.4 -4.4 H6 Q7.2 -4.4 7.2 -3.2 V0.4"/><path d="M-7 -1.6 H-1.8 L-0.2 -3.2 H7" stroke-width="1"/><path d="M5.4 2.8 V9.4 M2.1 6.1 H8.7"/></svg><svg class="ic" style="left:214.00px;top:95.50px" width="40" height="40" viewBox="-20 -20 40 40" fill="none" stroke="#d0d0d0" stroke-width="1.45" stroke-linecap="round" stroke-linejoin="round"><path d="M-3.7 -5 A6.1 6.1 0 1 0 1.9 -5.8"/><path d="M-6.9 -6.2 H-2.9 V-2.2"/></svg><svg class="ic" style="left:241.30px;top:95.50px" width="40" height="40" viewBox="-20 -20 40 40" fill="none" stroke="#d0d0d0" stroke-width="1.45" stroke-linecap="round" stroke-linejoin="round"><rect x="-6.6" y="-3.4" width="10.2" height="9.8" rx="1.6"/><path d="M-3.2 -3.6 V-5 Q-3.2 -6.6 -1.6 -6.6 H5.2 Q6.8 -6.6 6.8 -5 V1.6 Q6.8 3.2 5.2 3.2 H3.8"/><path d="M-4 1.5 H1"/></svg>
<div class="clip" style="left:286.00px;top:102.00px;width:828.00px;height:603.50px">
<div class="bx" style="left:56.30px;top:61.00px;width:2.70px;height:542.50px;background:#3a3a3a"></div>
<span class="t m" style="left:1.00px;width:43.90px;text-align:right;top:66.70px;font-size:13.35px;line-height:20px;color:#82868c">20</span><span class="t m" style="left:88.50px;top:66.70px;font-size:13.35px;line-height:20px;color:#dbdbdb">Users need to see what day they are submitting their presence for to avoid</span>
<span class="t m" style="left:88.50px;top:86.70px;font-size:13.35px;line-height:20px;color:#dbdbdb">confusion about whether they're marking attendance for today, tomorrow, or a</span>
<span class="t m" style="left:88.50px;top:106.70px;font-size:13.35px;line-height:20px;color:#dbdbdb">past date.</span>
<span class="t m" style="left:1.00px;width:43.90px;text-align:right;top:126.70px;font-size:13.35px;line-height:20px;color:#82868c">21</span>
<span class="t m" style="left:1.00px;width:43.90px;text-align:right;top:146.70px;font-size:13.35px;line-height:20px;color:#82868c">22</span><span class="t m" style="left:88.50px;top:146.70px;font-size:13.35px;line-height:20px;color:#dbdbdb"><span class="hb">**Why this priority**</span>: This is critical for user confidence and preventing</span>
<span class="t m" style="left:88.50px;top:166.70px;font-size:13.35px;line-height:20px;color:#dbdbdb">errors. Without a clear date indicator, users might accidentally submit</span>
<span class="t m" style="left:88.50px;top:186.70px;font-size:13.35px;line-height:20px;color:#dbdbdb">presence for the wrong day, especially around midnight or when accessing the</span>
<span class="t m" style="left:88.50px;top:206.70px;font-size:13.35px;line-height:20px;color:#dbdbdb">app at different times.</span>
<span class="t m" style="left:1.00px;width:43.90px;text-align:right;top:226.70px;font-size:13.35px;line-height:20px;color:#82868c">23</span>
<span class="t m" style="left:1.00px;width:43.90px;text-align:right;top:246.70px;font-size:13.35px;line-height:20px;color:#82868c">24</span><span class="t m" style="left:88.50px;top:246.70px;font-size:13.35px;line-height:20px;color:#dbdbdb"><span class="hb">**Independent Test**</span>: Can be fully tested by opening the homepage and verifying</span>
<span class="t m" style="left:88.50px;top:266.70px;font-size:13.35px;line-height:20px;color:#dbdbdb">the current date is prominently displayed. Delivers immediate value by</span>
<span class="t m" style="left:88.50px;top:286.70px;font-size:13.35px;line-height:20px;color:#dbdbdb">providing date context for presence submission.</span>
<span class="t m" style="left:1.00px;width:43.90px;text-align:right;top:306.70px;font-size:13.35px;line-height:20px;color:#82868c">25</span>
<span class="t m" style="left:1.00px;width:43.90px;text-align:right;top:326.70px;font-size:13.35px;line-height:20px;color:#82868c">26</span><span class="t m" style="left:88.50px;top:326.70px;font-size:13.35px;line-height:20px;color:#dbdbdb"><span class="hb">**Acceptance Scenarios**</span>:</span>
<span class="t m" style="left:1.00px;width:43.90px;text-align:right;top:346.70px;font-size:13.35px;line-height:20px;color:#82868c">27</span>
<span class="t m" style="left:1.00px;width:43.90px;text-align:right;top:366.70px;font-size:13.35px;line-height:20px;color:#82868c">28</span><span class="t m" style="left:88.50px;top:366.70px;font-size:13.35px;line-height:20px;color:#dbdbdb"><span class="nm">1.</span> <span class="hb">**Given**</span> a user opens the homepage on November 5, 2025 at 10:00 AM,</span>
<span class="t m" style="left:88.50px;top:386.70px;font-size:13.35px;line-height:20px;color:#dbdbdb"><span class="hb">**When**</span> the page loads, <span class="hb">**Then**</span> the current date "November 5, 2025" (or</span>
<span class="t m" style="left:88.50px;top:406.70px;font-size:13.35px;line-height:20px;color:#dbdbdb">localized format) is clearly visible near the presence submission form</span>
<span class="t m" style="left:1.00px;width:43.90px;text-align:right;top:426.70px;font-size:13.35px;line-height:20px;color:#82868c">29</span><span class="t m" style="left:88.50px;top:426.70px;font-size:13.35px;line-height:20px;color:#dbdbdb"><span class="nm">2.</span> <span class="hb">**Given**</span> a user opens the homepage at 11:59 PM, <span class="hb">**When**</span> the clock strikes</span>
<span class="t m" style="left:88.50px;top:446.70px;font-size:13.35px;line-height:20px;color:#dbdbdb">midnight, <span class="hb">**Then**</span> the displayed date automatically updates to the next day</span>
<span class="t m" style="left:88.50px;top:466.70px;font-size:13.35px;line-height:20px;color:#dbdbdb">without requiring a page refresh</span>
<span class="t m" style="left:1.00px;width:43.90px;text-align:right;top:486.70px;font-size:13.35px;line-height:20px;color:#82868c">30</span><span class="t m" style="left:88.50px;top:486.70px;font-size:13.35px;line-height:20px;color:#dbdbdb"><span class="nm">3.</span> <span class="hb">**Given**</span> a user in a different timezone opens the homepage, <span class="hb">**When**</span> the</span>
<span class="t m" style="left:88.50px;top:506.70px;font-size:13.35px;line-height:20px;color:#dbdbdb">page loads, <span class="hb">**Then**</span> the date displayed matches the user's local timezone</span>
<span class="t m" style="left:1.00px;width:43.90px;text-align:right;top:526.70px;font-size:13.35px;line-height:20px;color:#82868c">31</span><span class="t m" style="left:88.50px;top:526.70px;font-size:13.35px;line-height:20px;color:#dbdbdb"><span class="nm">4.</span> <span class="hb">**Given**</span> a user has already submitted their presence for today, <span class="hb">**When**</span></span>
<span class="t m" style="left:88.50px;top:546.70px;font-size:13.35px;line-height:20px;color:#dbdbdb">they view the homepage, <span class="hb">**Then**</span> the current date is still displayed so they</span>
<span class="t m" style="left:88.50px;top:566.70px;font-size:13.35px;line-height:20px;color:#dbdbdb">can confirm which day their submission applies to</span>
<span class="t m" style="left:1.00px;width:43.90px;text-align:right;top:586.70px;font-size:13.35px;line-height:20px;color:#82868c">32</span>
<div class="bx" style="left:47.30px;top:145.80px;width:21.20px;height:19.90px;background:#323232;border-radius:4.5px"></div>
<svg class="ic" style="left:48.90px;top:146.70px" width="17.8" height="17.8" viewBox="0 0 16 16" fill="none" stroke="#d4d4d4" stroke-width="1.2" stroke-linecap="round" stroke-linejoin="round"><path d="M8 3 V13 M3 8 H13"/></svg>
<div class="bx" style="left:47.30px;top:165.80px;width:21.20px;height:19.90px;background:#323232;border-radius:4.5px"></div>
<svg class="ic" style="left:48.90px;top:166.70px" width="17.8" height="17.8" viewBox="0 0 16 16" fill="none" stroke="#d4d4d4" stroke-width="1.2" stroke-linecap="round" stroke-linejoin="round"><path d="M8 3 V13 M3 8 H13"/></svg>
<div class="bx" style="left:47.30px;top:185.80px;width:21.20px;height:19.90px;background:#323232;border-radius:4.5px"></div>
<svg class="ic" style="left:48.90px;top:186.70px" width="17.8" height="17.8" viewBox="0 0 16 16" fill="none" stroke="#d4d4d4" stroke-width="1.2" stroke-linecap="round" stroke-linejoin="round"><path d="M8 3 V13 M3 8 H13"/></svg>
<div class="bx" style="left:47.30px;top:205.80px;width:21.20px;height:19.90px;background:#323232;border-radius:4.5px"></div>
<svg class="ic" style="left:48.90px;top:206.70px" width="17.8" height="17.8" viewBox="0 0 16 16" fill="none" stroke="#d4d4d4" stroke-width="1.2" stroke-linecap="round" stroke-linejoin="round"><path d="M8 3 V13 M3 8 H13"/></svg>
<div class="bx" style="left:0.00px;top:0.00px;width:812.30px;height:61.50px;background:#1f1f1f;box-shadow:0 2px 3px rgba(0,0,0,.8);border-bottom:1px solid #0d0d0d"></div>
<span class="t m" style="left:1.00px;width:43.90px;text-align:right;top:0.60px;font-size:13.35px;line-height:20px;color:#8a8a8a">1</span><span class="t m" style="left:88.50px;top:0.60px;font-size:13.35px;line-height:20px;color:#dbdbdb"><span class="hb"># Feature Specification: Display Current Date on Homepage</span></span>
<span class="t m" style="left:1.00px;width:43.90px;text-align:right;top:20.70px;font-size:13.35px;line-height:20px;color:#8a8a8a">16</span><span class="t m" style="left:88.50px;top:20.70px;font-size:13.35px;line-height:20px;color:#dbdbdb"><span class="hb">## User Scenarios &amp; Testing </span><span class="hbi">_(mandatory)</span><span class="hu">_</span></span>
<span class="t m" style="left:1.00px;width:43.90px;text-align:right;top:40.80px;font-size:13.35px;line-height:20px;color:#8a8a8a">18</span><span class="t m" style="left:88.50px;top:40.80px;font-size:13.35px;line-height:20px;color:#dbdbdb"><span class="hb">### User Story 1 – View Current Date Context (Priority: P1)</span></span>
<div class="bx" style="left:740.50px;top:0.00px;width:71.80px;height:268.00px;background:#171717"></div><svg class="ic" style="left:0;top:0" width="830" height="610" viewBox="0 0 830 610" fill="none" stroke-linecap="butt"><path d="M743.6 3.3h4.8M749.2 3.3h4.0M758.8 3.3h4.8M764.4 3.3h6.4M771.6 3.3h1.6M774.0 3.3h3.2M778.0 3.3h3.2M782.0 3.3h4.8M787.6 3.3h4.8M793.2 3.3h3.2M797.2 3.3h4.0M743.6 5.6h3.2M747.6 5.6h4.0M752.4 5.6h4.0M757.2 5.6h2.4M760.4 5.6h2.4M767.6 5.6h6.4M778.8 5.6h4.0M783.6 5.6h6.4M790.8 5.6h2.4M794.0 5.6h5.6M800.4 5.6h0.6M743.6 7.8h1.6M746.0 7.8h7.2M754.0 7.8h4.0M758.8 7.8h4.0M763.6 7.8h7.2M771.6 7.8h3.2M775.6 7.8h3.2M779.6 7.8h2.4M782.8 7.8h1.6M785.2 7.8h6.4M792.4 7.8h2.4M802.8 7.8h0.3M743.6 10.0h2.4M746.8 10.0h4.0M751.6 10.0h4.8M757.2 10.0h4.8M762.8 10.0h4.8M768.4 10.0h3.2M772.4 10.0h1.7M743.6 14.5h3.2M747.6 14.5h2.4M750.8 14.5h3.2M754.8 14.5h1.0M743.6 16.7h5.6M750.0 16.7h5.6M756.4 16.7h3.7M743.6 21.2h3.2M747.6 21.2h2.4M750.8 21.2h3.2M754.8 21.2h5.6M761.2 21.2h3.2M765.2 21.2h3.2M769.2 21.2h4.0M774.0 21.2h3.2M778.0 21.2h4.8M783.6 21.2h1.6M786.0 21.2h3.2M790.0 21.2h3.2M794.0 21.2h4.0M798.8 21.2h1.8M743.6 23.4h4.0M748.4 23.4h2.4M751.6 23.4h3.2M755.6 23.4h4.8M761.2 23.4h6.4M768.4 23.4h4.8M774.0 23.4h4.0M778.8 23.4h2.4M782.0 23.4h2.4M785.2 23.4h3.2M789.2 23.4h2.4M792.4 23.4h7.2M800.4 23.4h2.2M743.6 25.7h2.4M746.8 25.7h2.4M750.0 25.7h1.6M752.4 25.7h4.8M758.0 25.7h2.4M761.2 25.7h6.4M768.4 25.7h7.2M776.4 25.7h2.4M782.8 25.7h7.2M790.8 25.7h2.4M794.0 25.7h3.2M743.6 27.9h3.2M747.6 27.9h3.2M751.6 27.9h4.0M756.4 27.9h4.0M761.2 27.9h1.6M763.6 27.9h4.0M768.4 27.9h7.2M776.4 27.9h5.6M782.8 27.9h5.6M789.2 27.9h2.4M792.4 27.9h1.6M794.8 27.9h2.4M798.0 27.9h2.4M743.6 30.1h4.8M749.2 30.1h2.4M752.4 30.1h4.0M757.2 30.1h5.6M763.6 30.1h2.4M766.8 30.1h1.6M769.2 30.1h3.2M773.2 30.1h2.4M743.6 36.8h3.2M747.6 36.8h3.2M751.6 36.8h3.2M755.6 36.8h2.4M758.8 36.8h4.0M763.6 36.8h2.4M766.8 36.8h4.0M771.6 36.8h7.2M779.6 36.8h2.4M782.8 36.8h2.4M786.0 36.8h7.2M794.0 36.8h2.4M797.2 36.8h2.4M800.4 36.8h2.1M743.6 39.1h2.4M746.8 39.1h4.8M752.4 39.1h7.2M760.4 39.1h2.4M763.6 39.1h5.6M770.0 39.1h4.0M774.8 39.1h4.0M784.4 39.1h5.6M790.8 39.1h1.6M793.2 39.1h5.3M743.6 43.5h5.6M750.0 43.5h2.4M753.2 43.5h3.2M757.2 43.5h2.4M760.4 43.5h3.2M764.4 43.5h2.4M767.6 43.5h2.4M770.8 43.5h7.2M778.8 43.5h3.2M782.8 43.5h5.6M789.2 43.5h6.4M796.4 43.5h4.0M743.6 45.8h1.6M746.0 45.8h2.4M749.2 45.8h2.4M752.4 45.8h1.6M754.8 45.8h3.2M758.8 45.8h3.2M762.8 45.8h2.4M766.0 45.8h4.0M770.8 45.8h4.0M775.6 45.8h3.2M779.6 45.8h1.6M782.0 45.8h3.2M786.0 45.8h2.4M789.2 45.8h2.4M792.4 45.8h3.2M796.4 45.8h5.6M743.6 48.0h3.2M747.6 48.0h7.2M755.6 48.0h4.0M760.4 48.0h1.5M743.6 52.5h1.6M746.0 52.5h5.6M752.4 52.5h5.6M758.8 52.5h4.8M764.4 52.5h7.2M772.4 52.5h4.8M778.0 52.5h4.0M782.8 52.5h3.2M786.8 52.5h3.2M790.8 52.5h7.2M798.8 52.5h1.8M746.8 54.7h7.2M754.8 54.7h3.2M758.8 54.7h1.6M761.2 54.7h4.0M766.0 54.7h7.2M774.0 54.7h6.2M743.6 59.2h3.2M747.6 59.2h2.4M756.4 59.2h4.0M743.6 61.4h5.6M750.0 61.4h1.6M752.4 61.4h3.2M759.6 61.4h4.0M764.4 61.4h3.2M768.4 61.4h3.2M772.4 61.4h1.6M774.8 61.4h2.4M778.0 61.4h6.4M785.2 61.4h1.6M787.6 61.4h7.2M795.6 61.4h5.1M743.6 63.6h2.4M746.8 63.6h6.4M754.0 63.6h4.0M758.8 63.6h4.8M764.4 63.6h6.4M771.6 63.6h1.6M774.0 63.6h5.6M780.4 63.6h5.6M786.8 63.6h5.6M793.2 63.6h6.4M800.4 63.6h1.6M743.6 65.9h6.4M750.8 65.9h7.2M758.8 65.9h7.2M766.8 65.9h1.6M769.2 65.9h7.2M777.2 65.9h2.4M780.4 65.9h4.8M794.0 65.9h5.6M800.4 65.9h3.5M743.6 68.1h4.8M749.2 68.1h5.6M755.6 68.1h2.4M758.8 68.1h2.4M762.0 68.1h4.8M767.6 68.1h2.4M770.8 68.1h3.2M774.8 68.1h3.2M778.8 68.1h7.2M786.8 68.1h4.8M792.4 68.1h2.4M795.6 68.1h5.3M743.6 70.3h1.6M746.0 70.3h7.2M754.0 70.3h6.4M761.2 70.3h3.2M765.2 70.3h3.2M772.4 70.3h1.6M774.8 70.3h7.2M782.8 70.3h3.2M786.8 70.3h3.2M790.8 70.3h3.2M794.8 70.3h4.8M800.4 70.3h0.9M743.6 72.6h2.4M746.8 72.6h1.6M749.2 72.6h2.4M752.4 72.6h4.8M758.0 72.6h4.0M762.8 72.6h3.2M766.8 72.6h2.4M770.0 72.6h5.6M776.4 72.6h4.0M781.2 72.6h7.2M789.2 72.6h2.4M792.4 72.6h3.2M796.4 72.6h4.8M743.6 74.8h4.8M749.2 74.8h4.0M754.0 74.8h2.4M757.2 74.8h4.0M766.8 74.8h4.0M771.6 74.8h2.4M774.8 74.8h3.2M778.8 74.8h3.2M782.8 74.8h2.4M786.0 74.8h6.4M793.2 74.8h4.0M798.0 74.8h1.6M800.4 74.8h1.6M802.8 74.8h1.6M743.6 77.0h2.4M746.8 77.0h3.2M750.8 77.0h4.0M755.6 77.0h4.0M760.4 77.0h4.0M765.2 77.0h7.2M773.2 77.0h5.6M779.6 77.0h2.4M782.8 77.0h0.5M743.6 79.3h2.4M743.6 83.7h3.2M747.6 83.7h7.2M755.6 83.7h7.2M763.6 83.7h4.8M769.2 83.7h4.0M774.0 83.7h7.2M782.0 83.7h3.2M786.0 83.7h4.8M791.6 83.7h4.8M797.2 83.7h4.8M743.6 86.0h5.6M750.0 86.0h2.4M753.2 86.0h5.6M759.6 86.0h3.2M763.6 86.0h6.4M770.8 86.0h1.6M773.2 86.0h3.9M743.6 90.4h5.6M750.0 90.4h3.2M754.0 90.4h1.6M756.4 90.4h6.4M763.6 90.4h2.4M766.8 90.4h5.6M773.2 90.4h3.2M777.2 90.4h3.2M781.2 90.4h7.2M789.2 90.4h3.2M793.2 90.4h1.6M795.6 90.4h4.0M800.4 90.4h1.6M749.2 92.7h4.0M754.0 92.7h5.6M760.4 92.7h4.8M766.0 92.7h2.4M769.2 92.7h2.4M772.4 92.7h7.2M780.4 92.7h7.2M788.4 92.7h4.8M796.4 92.7h2.4M799.6 92.7h1.6M802.0 92.7h2.5M743.6 94.9h7.2M751.6 94.9h7.2M759.6 94.9h2.3M743.6 99.4h3.2M747.6 99.4h6.4M754.8 99.4h3.2M766.0 99.4h5.6M772.4 99.4h4.8M778.0 99.4h4.0M782.8 99.4h3.2M786.8 99.4h3.2M790.8 99.4h1.6M793.2 99.4h7.2M743.6 101.6h1.6M746.0 101.6h7.2M754.0 101.6h2.4M757.2 101.6h7.2M765.2 101.6h4.0M770.0 101.6h1.6M772.4 101.6h4.0M777.2 101.6h4.0M782.0 101.6h3.2M786.0 101.6h5.6M792.4 101.6h4.8M798.0 101.6h3.2M743.6 108.3h3.2M747.6 108.3h6.4M754.8 108.3h2.4M758.0 108.3h4.8M763.6 108.3h7.2M771.6 108.3h6.4M778.8 108.3h4.0M783.6 108.3h1.6M786.0 108.3h2.4M789.2 108.3h1.6M791.6 108.3h4.8M797.2 108.3h4.0M802.0 108.3h2.0M743.6 110.5h4.0M748.4 110.5h7.2M756.4 110.5h4.8M762.0 110.5h7.2M770.0 110.5h4.0M774.8 110.5h4.8M780.4 110.5h1.6M782.8 110.5h2.4M786.0 110.5h2.4M789.2 110.5h3.2M793.2 110.5h3.2M797.2 110.5h4.0M743.6 112.8h4.8M749.2 112.8h5.6M755.6 112.8h3.2M759.6 112.8h4.8M765.2 112.8h4.0M770.0 112.8h7.2M778.0 112.8h1.6M780.4 112.8h4.8M786.0 112.8h1.6M788.4 112.8h2.4M791.6 112.8h4.0M796.4 112.8h4.0M743.6 115.0h6.4M750.8 115.0h4.0M759.6 115.0h6.4M766.8 115.0h7.2M778.0 115.0h3.2M782.0 115.0h4.8M787.6 115.0h4.0M792.4 115.0h4.0M797.2 115.0h2.4M743.6 117.2h3.2M747.6 117.2h2.4M750.8 117.2h4.0M755.6 117.2h4.8M761.2 117.2h6.4M768.4 117.2h3.2M772.4 117.2h2.4M775.6 117.2h2.4M778.8 117.2h4.8M784.4 117.2h4.0M789.2 117.2h4.0M794.0 117.2h2.4M797.2 117.2h2.4M800.4 117.2h1.2M743.6 119.4h4.8M749.2 119.4h2.4M752.4 119.4h6.4M759.6 119.4h3.2M763.6 119.4h7.2M771.6 119.4h3.2M775.6 119.4h6.4M782.8 119.4h3.2M786.8 119.4h3.2M790.8 119.4h2.4M794.0 119.4h1.4M743.6 121.7h3.0M743.6 123.9h2.4M746.8 123.9h3.2M750.8 123.9h0.1M743.6 128.4h2.4M746.8 128.4h1.6M749.2 128.4h4.8M754.8 128.4h3.2M758.8 128.4h4.0M763.6 128.4h3.2M767.6 128.4h1.6M770.0 128.4h6.4M777.2 128.4h2.4M780.4 128.4h2.4M783.6 128.4h3.2M787.6 128.4h7.2M795.6 128.4h2.4M798.8 128.4h5.0M743.6 130.6h1.6M746.0 130.6h2.4M749.2 130.6h3.2M753.2 130.6h7.2M761.2 130.6h1.6M763.6 130.6h4.0M768.4 130.6h2.4M771.6 130.6h2.4M774.8 130.6h4.8M780.4 130.6h2.4M783.6 130.6h4.0M788.4 130.6h2.4M791.6 130.6h2.4M794.8 130.6h4.0M799.6 130.6h1.5M743.6 132.8h7.2M751.6 132.8h1.6M754.0 132.8h6.4M761.2 132.8h4.0M766.0 132.8h4.0M770.8 132.8h4.0M775.6 132.8h3.2M779.6 132.8h4.0M784.4 132.8h4.0M789.2 132.8h2.4M792.4 132.8h4.0M797.2 132.8h2.4M800.4 132.8h1.6M802.8 132.8h0.0M743.6 135.1h4.0M748.4 135.1h6.4M755.6 135.1h5.6M762.0 135.1h4.0M766.8 135.1h5.6M773.2 135.1h2.4M776.4 135.1h4.8M782.0 135.1h3.2M786.0 135.1h1.6M788.4 135.1h4.8M794.0 135.1h6.4M801.2 135.1h1.9M743.6 137.3h6.4M750.8 137.3h2.4M754.0 137.3h3.2M758.0 137.3h6.4M765.2 137.3h4.8M770.8 137.3h3.2M774.8 137.3h5.6M781.2 137.3h4.0M786.0 137.3h3.2M790.0 137.3h3.2M794.0 137.3h5.6M800.4 137.3h1.5M743.6 139.5h4.0M748.4 139.5h6.4M755.6 139.5h7.2M763.6 139.5h7.2M771.6 139.5h6.4M778.8 139.5h4.0M783.6 139.5h4.8M792.4 139.5h6.4M799.6 139.5h3.1M743.6 141.8h6.4M750.8 141.8h4.8M756.4 141.8h4.8M762.0 141.8h2.4M765.2 141.8h4.0M770.0 141.8h4.8M775.6 141.8h7.2M783.6 141.8h7.2M791.6 141.8h4.0M796.4 141.8h4.2M743.6 144.0h5.6M750.0 144.0h7.2M761.2 144.0h2.4M764.4 144.0h2.4M767.6 144.0h4.8M773.2 144.0h2.4M776.4 144.0h3.2M780.4 144.0h4.0M785.2 144.0h3.2M789.2 144.0h6.4M796.4 144.0h4.2M743.6 146.2h5.6M750.0 146.2h4.8M755.6 146.2h3.2M759.6 146.2h3.2M763.6 146.2h1.6M766.0 146.2h4.0M770.8 146.2h3.2M774.8 146.2h4.0M779.6 146.2h3.2M783.6 146.2h2.7M743.6 155.2h4.0M748.4 155.2h4.0M753.2 155.2h2.4M756.4 155.2h2.4M759.6 155.2h1.6M762.0 155.2h5.6M768.4 155.2h7.2M776.4 155.2h6.4M783.6 155.2h4.0M788.4 155.2h1.6M790.8 155.2h3.2M794.8 155.2h4.0M799.6 155.2h1.6M743.6 157.4h2.4M746.8 157.4h6.4M754.0 157.4h1.6M756.4 157.4h6.4M763.6 157.4h2.4M766.8 157.4h5.6M773.2 157.4h6.4M780.4 157.4h2.4M783.6 157.4h6.4M790.8 157.4h2.4M794.0 157.4h3.2M798.0 157.4h4.8M743.6 159.6h7.2M751.6 159.6h7.2M759.6 159.6h4.0M764.4 159.6h1.6M766.8 159.6h5.6M773.2 159.6h6.4M780.4 159.6h4.8M786.0 159.6h5.6M792.4 159.6h3.2M796.4 159.6h1.6M743.6 161.9h2.4M746.8 161.9h1.6M752.4 161.9h5.6M758.8 161.9h3.2M762.8 161.9h3.2M766.8 161.9h7.2M774.8 161.9h7.2M782.8 161.9h6.4M790.0 161.9h3.2M794.0 161.9h7.2M743.6 164.1h4.8M749.2 164.1h1.6M751.6 164.1h4.0M756.4 164.1h4.8M762.0 164.1h7.2M770.0 164.1h3.2M774.0 164.1h3.2M778.0 164.1h1.6M780.4 164.1h3.2M784.4 164.1h3.2M788.4 164.1h7.2M796.4 164.1h5.6M802.8 164.1h0.0M743.6 166.3h3.2M754.0 166.3h3.2M758.0 166.3h3.2M762.0 166.3h4.0M766.8 166.3h4.0M771.6 166.3h3.2M775.6 166.3h7.2M783.6 166.3h7.2M791.6 166.3h5.6M798.0 166.3h4.3M743.6 168.6h1.6M746.0 168.6h3.2M750.0 168.6h3.2M754.0 168.6h4.0M758.8 168.6h2.4M762.0 168.6h2.4M765.2 168.6h1.6M767.6 168.6h6.4M774.8 168.6h4.0M779.6 168.6h1.6M782.0 168.6h2.4M785.2 168.6h7.2M743.6 173.0h2.4M746.8 173.0h2.4M750.0 173.0h4.0M754.8 173.0h5.6M761.2 173.0h0.7M743.6 175.3h4.0M748.4 175.3h3.2M752.4 175.3h1.6M754.8 175.3h7.2M762.8 175.3h7.2M770.8 175.3h4.8M776.4 175.3h2.4M779.6 175.3h7.2M787.6 175.3h4.0M796.4 175.3h3.2M800.4 175.3h1.2M743.6 177.5h4.0M748.4 177.5h6.4M755.6 177.5h3.2M759.6 177.5h1.6M762.0 177.5h1.6M764.4 177.5h2.4M767.6 177.5h1.6M770.0 177.5h3.2M774.0 177.5h2.4M777.2 177.5h3.2M781.2 177.5h1.6M783.6 177.5h3.2M790.0 177.5h4.8M795.6 177.5h2.4M798.8 177.5h4.9M743.6 179.7h5.6M750.0 179.7h2.4M753.2 179.7h3.2M757.2 179.7h3.2M761.2 179.7h2.4M764.4 179.7h2.4M767.6 179.7h5.6M774.0 179.7h7.2M782.0 179.7h2.4M785.2 179.7h4.0M790.0 179.7h2.4M801.2 179.7h2.1M743.6 182.0h4.0M748.4 182.0h5.6M754.8 182.0h7.2M762.8 182.0h4.8M768.4 182.0h6.4M775.6 182.0h6.4M782.8 182.0h4.0M787.6 182.0h5.6M794.0 182.0h4.8M799.6 182.0h1.8M743.6 184.2h4.8M749.2 184.2h3.2M753.2 184.2h2.4M756.4 184.2h7.2M764.4 184.2h3.2M768.4 184.2h3.2M772.4 184.2h6.4M779.6 184.2h2.4M782.8 184.2h4.0M787.6 184.2h4.0M792.4 184.2h4.0M797.2 184.2h3.2M801.2 184.2h1.6M743.6 186.4h7.2M751.6 186.4h4.0M756.4 186.4h2.4M759.6 186.4h3.2M763.6 186.4h3.2M767.6 186.4h2.4M770.8 186.4h4.0M775.6 186.4h1.6M778.0 186.4h4.0M782.8 186.4h5.6M789.2 186.4h0.2M743.6 195.4h3.2M747.6 195.4h4.0M752.4 195.4h6.4M759.6 195.4h4.0M764.4 195.4h7.2M772.4 195.4h7.2M780.4 195.4h3.2M784.4 195.4h3.4M743.6 197.6h4.0M748.4 197.6h7.2M756.4 197.6h4.0M761.2 197.6h4.0M766.0 197.6h7.2M774.0 197.6h4.0M778.8 197.6h1.6M781.2 197.6h4.0M786.0 197.6h3.0M743.6 199.8h2.4M746.8 199.8h4.0M751.6 199.8h4.0M756.4 199.8h2.4M759.6 199.8h5.6M766.0 199.8h3.2M770.0 199.8h2.4M773.2 199.8h4.8M778.8 199.8h4.8M784.4 199.8h4.1M743.6 202.1h4.0M748.4 202.1h4.0M753.2 202.1h4.8M758.8 202.1h7.2M766.8 202.1h5.6M773.2 202.1h2.4M776.4 202.1h6.4M783.6 202.1h1.6M786.0 202.1h1.1M743.6 204.3h1.6M746.0 204.3h4.0M750.8 204.3h7.2M758.8 204.3h3.2M762.8 204.3h3.2M766.8 204.3h1.2M743.6 213.2h2.4M746.8 213.2h7.2M754.8 213.2h7.2M762.8 213.2h3.2M766.8 213.2h2.4M770.0 213.2h7.2M778.0 213.2h2.1M743.6 215.5h3.2M747.6 215.5h7.2M755.6 215.5h4.8M761.2 215.5h3.2M765.2 215.5h4.0M770.0 215.5h4.0M743.6 217.7h3.2M747.6 217.7h7.2M755.6 217.7h4.8M761.2 217.7h6.4M768.4 217.7h7.2M776.4 217.7h2.3M743.6 219.9h4.0M748.4 219.9h6.4M755.6 219.9h2.4M758.8 219.9h4.0M763.6 219.9h1.6M766.0 219.9h3.2M770.0 219.9h4.1M743.6 228.9h4.0M748.4 228.9h3.2M752.4 228.9h5.6M758.8 228.9h6.4M766.0 228.9h2.4M769.2 228.9h5.6M775.6 228.9h3.2M779.6 228.9h3.2M783.6 228.9h4.8M789.2 228.9h2.4M792.4 228.9h3.2M796.4 228.9h2.4M799.6 228.9h4.0M743.6 231.1h4.8M749.2 231.1h4.8M754.8 231.1h2.4M758.0 231.1h1.6M760.4 231.1h4.0M765.2 231.1h6.4M772.4 231.1h3.2M776.4 231.1h4.0M781.2 231.1h7.2M789.2 231.1h7.2M743.6 233.3h6.4M750.8 233.3h4.0M755.6 233.3h2.4M758.8 233.3h4.8M764.4 233.3h2.4M767.6 233.3h4.0M772.4 233.3h4.0M777.2 233.3h7.2M785.2 233.3h4.8M790.8 233.3h5.6M797.2 233.3h3.2M801.2 233.3h1.2M743.6 235.6h5.6M750.0 235.6h3.2M754.0 235.6h4.8M759.6 235.6h5.6M766.0 235.6h5.6M772.4 235.6h3.2M776.4 235.6h2.4M779.6 235.6h4.0M784.4 235.6h2.4M787.6 235.6h7.2M795.6 235.6h1.6M798.0 235.6h2.5M743.6 237.8h5.6M750.0 237.8h4.0M754.8 237.8h1.6M757.2 237.8h4.8M762.8 237.8h7.2M770.8 237.8h5.6M777.2 237.8h6.4M784.4 237.8h2.4M787.6 237.8h6.4M794.8 237.8h2.4M798.0 237.8h5.2M743.6 240.0h7.2M751.6 240.0h2.4M754.8 240.0h1.6M757.2 240.0h2.4M768.4 240.0h2.4M771.6 240.0h5.6M778.0 240.0h3.2M782.0 240.0h1.6M784.4 240.0h4.0M789.2 240.0h3.2M743.6 244.5h4.0M748.4 244.5h1.6M750.8 244.5h6.4M758.0 244.5h7.2M766.0 244.5h4.8M771.6 244.5h5.6M778.0 244.5h7.2M786.0 244.5h2.4M794.0 244.5h7.2M802.0 244.5h1.6M743.6 246.7h2.4M746.8 246.7h1.6M749.2 246.7h6.4M756.4 246.7h2.4M759.6 246.7h4.0M764.4 246.7h2.4M767.6 246.7h2.4M770.8 246.7h5.6M777.2 246.7h4.8M782.8 246.7h3.2M786.8 246.7h1.6M789.2 246.7h1.6M791.6 246.7h7.2M799.6 246.7h3.2M743.6 249.0h3.2M747.6 249.0h6.4M754.8 249.0h4.8M760.4 249.0h4.0M765.2 249.0h6.4M772.4 249.0h4.8M778.0 249.0h2.4M781.2 249.0h2.4M784.4 249.0h7.2M792.4 249.0h4.0M797.2 249.0h4.8M802.8 249.0h1.3M743.6 251.2h3.2M747.6 251.2h7.2M755.6 251.2h6.4M762.8 251.2h6.4M770.0 251.2h1.6M772.4 251.2h6.4M779.6 251.2h6.4M786.8 251.2h3.2M790.8 251.2h7.2M798.8 251.2h2.9M743.6 253.4h3.2M747.6 253.4h4.0M752.4 253.4h4.0M757.2 253.4h1.6M759.6 253.4h2.4M762.8 253.4h6.4M770.0 253.4h5.6M776.4 253.4h4.8M782.0 253.4h2.4M785.2 253.4h4.1M743.6 257.9h3.2M747.6 257.9h3.2M751.6 257.9h1.6M754.0 257.9h4.8M759.6 257.9h3.2M763.6 257.9h1.6M766.0 257.9h4.8M771.6 257.9h5.6M778.0 257.9h2.4M781.2 257.9h6.4M788.4 257.9h3.2M792.4 257.9h5.6M798.8 257.9h4.5M743.6 260.1h3.2M747.6 260.1h2.4M750.8 260.1h3.2M754.8 260.1h6.4M762.0 260.1h5.6M768.4 260.1h3.2M772.4 260.1h4.8M778.0 260.1h2.4M781.2 260.1h4.8M786.8 260.1h2.4M790.0 260.1h1.6M792.4 260.1h5.6M798.8 260.1h2.4M802.0 260.1h0.9M743.6 262.4h6.4M750.8 262.4h3.2M754.8 262.4h4.8M760.4 262.4h6.4M767.6 262.4h3.2M771.6 262.4h4.0M776.4 262.4h2.4M779.6 262.4h1.6M782.0 262.4h5.6M788.4 262.4h4.8M794.0 262.4h2.4M797.2 262.4h5.6M743.6 264.6h2.4M746.8 264.6h2.4M750.0 264.6h6.4M757.2 264.6h2.4M760.4 264.6h7.2M768.4 264.6h2.4M771.6 264.6h2.4M774.8 264.6h3.2M778.8 264.6h1.4" stroke="#d4d4d4" stroke-opacity=".58" stroke-width="1.5"/><path d="M743.6 1.1h3.2M747.6 1.1h4.8M753.2 1.1h7.2M761.2 1.1h2.4M764.4 1.1h1.6M766.8 1.1h3.2M770.8 1.1h7.2M778.8 1.1h6.4M786.0 1.1h1.5M754.0 3.3h4.0M763.6 5.6h3.2M774.8 5.6h3.2M795.6 7.8h6.4M779.6 25.7h2.4M798.0 25.7h3.2M776.4 30.1h5.0M743.6 32.4h2.4M746.8 32.4h4.8M752.4 32.4h4.0M757.2 32.4h6.4M764.4 32.4h5.6M770.8 32.4h3.3M743.6 34.6h5.6M750.0 34.6h3.2M754.0 34.6h3.2M758.0 34.6h4.8M763.6 34.6h5.6M770.0 34.6h5.6M776.4 34.6h4.8M782.0 34.6h5.5M779.6 39.1h4.0M743.6 54.7h2.4M750.8 59.2h4.8M756.4 61.4h2.4M786.0 65.9h7.2M769.2 70.3h2.4M802.0 72.6h1.0M762.0 74.8h4.0M743.6 81.5h3.2M747.6 81.5h4.8M753.2 81.5h1.6M755.6 81.5h5.6M762.0 81.5h2.4M765.2 81.5h2.4M768.4 81.5h4.8M774.0 81.5h4.0M778.8 81.5h4.0M783.6 81.5h3.2M743.6 92.7h4.8M794.0 92.7h1.6M758.8 99.4h6.4M743.6 106.1h3.2M747.6 106.1h3.2M751.6 106.1h4.8M757.2 106.1h3.2M761.2 106.1h0.7M755.6 115.0h3.2M774.8 115.0h2.4M800.4 115.0h0.4M789.2 139.5h2.4M758.0 144.0h2.4M743.6 148.5h4.0M748.4 148.5h4.8M754.0 148.5h5.6M760.4 148.5h5.6M766.8 148.5h4.3M743.6 150.7h2.4M746.8 150.7h3.2M750.8 150.7h5.6M757.2 150.7h7.2M765.2 150.7h4.0M770.0 150.7h4.0M774.8 150.7h3.2M778.8 150.7h1.4M798.8 159.6h3.4M749.2 161.9h2.4M747.6 166.3h5.6M792.4 175.3h3.2M787.6 177.5h1.6M793.2 179.7h7.2M743.6 190.9h2.4M746.8 190.9h3.2M750.8 190.9h6.4M758.0 190.9h4.0M762.8 190.9h1.6M743.6 208.8h4.0M748.4 208.8h4.8M754.0 208.8h3.2M758.0 208.8h2.4M761.2 208.8h0.7M774.8 215.5h3.1M743.6 224.4h6.4M750.8 224.4h2.4M754.0 224.4h6.4M761.2 224.4h2.4M764.4 224.4h3.2M768.4 224.4h2.4M771.6 224.4h2.5M797.2 231.1h3.8M760.4 240.0h7.2M743.6 242.3h1.6M746.0 242.3h4.8M751.6 242.3h6.4M758.8 242.3h5.6M765.2 242.3h1.6M767.6 242.3h2.4M770.8 242.3h4.0M775.6 242.3h4.6M789.2 244.5h4.0" stroke="#4c86c2" stroke-opacity=".8" stroke-width="1.5"/></svg><div class="bx" style="left:743.60px;top:83.30px;width:68.40px;height:1.40px;background:#3b78c8"></div><div class="bx" style="left:743.60px;top:112.80px;width:68.40px;height:1.40px;background:#3b78c8"></div><div class="bx" style="left:743.60px;top:173.30px;width:68.40px;height:1.40px;background:#3b78c8"></div><div class="bx" style="left:743.60px;top:235.90px;width:68.40px;height:1.40px;background:#3b78c8"></div><div class="bx" style="left:743.60px;top:248.80px;width:68.40px;height:1.40px;background:#3b78c8"></div><div class="bx" style="left:743.60px;top:2.60px;width:17.40px;height:4.00px;background:rgba(38,79,120,.8)"></div><div class="bx" style="left:812.50px;top:60.20px;width:15.50px;height:88.30px;background:#424242"></div><div class="bx" style="left:812.50px;top:1.20px;width:15.50px;height:1.80px;background:#a6a6a6"></div><div class="bx" style="left:821.90px;top:163.20px;width:6.10px;height:6.80px;background:#478de6"></div><div class="bx" style="left:821.90px;top:216.80px;width:6.10px;height:6.80px;background:#478de6"></div><div class="bx" style="left:821.90px;top:333.70px;width:6.10px;height:6.80px;background:#478de6"></div><div class="bx" style="left:821.90px;top:453.20px;width:6.10px;height:6.80px;background:#478de6"></div><div class="bx" style="left:821.90px;top:480.10px;width:6.10px;height:6.80px;background:#478de6"></div>
</div>
<div class="bx" style="left:0.00px;top:705.00px;width:1113.70px;height:24.40px;background:#181818;border-top:1px solid #2b2b2b"></div>
<div class="bx" style="left:0.00px;top:705.00px;width:38.80px;height:24.40px;background:#0078d4"></div>
<span class="t" style="left:66.30px;top:707.23px;font-size:13.4px;line-height:20px;height:20px;letter-spacing:0.678px;color:#ccc;">002-display-current-date</span>
<span class="t" style="left:288.00px;top:707.23px;font-size:13.4px;line-height:20px;height:20px;color:#ccc;">0</span>
<span class="t" style="left:319.30px;top:707.23px;font-size:13.4px;line-height:20px;height:20px;color:#ccc;">0</span>
<span class="t" style="left:351.00px;top:707.23px;font-size:13.4px;line-height:20px;height:20px;letter-spacing:0.203px;color:#ccc;">37</span>
<span class="t" style="left:405.30px;top:707.23px;font-size:13.4px;line-height:20px;height:20px;letter-spacing:0.038px;color:#ccc;">Live Share</span>
<span class="t" style="left:507.70px;top:707.23px;font-size:13.4px;line-height:20px;height:20px;letter-spacing:0.251px;color:#ccc;">Pull Request #42</span>
<span class="t" style="left:687.70px;top:707.23px;font-size:13.4px;line-height:20px;height:20px;letter-spacing:0.161px;color:#ccc;">Spaces: 4</span>
<span class="t" style="left:767.70px;top:707.23px;font-size:13.4px;line-height:20px;height:20px;letter-spacing:0.473px;color:#ccc;">UTF-8</span>
<span class="t" style="left:826.00px;top:707.23px;font-size:13.4px;line-height:20px;height:20px;letter-spacing:-0.313px;color:#ccc;">LF</span>
<span class="t" style="left:881.30px;top:707.23px;font-size:13.4px;line-height:20px;height:20px;letter-spacing:0.404px;color:#ccc;">Markdown</span>
<span class="t" style="left:1017.00px;top:707.23px;font-size:13.4px;line-height:20px;height:20px;letter-spacing:0.355px;color:#ccc;">Prettier</span>
<svg class="ic" style="left:-0.70px;top:697.50px" width="40" height="40" viewBox="-20 -20 40 40" fill="none" stroke="#fff" stroke-width="1.35" stroke-linecap="round" stroke-linejoin="round"><path d="M-4.8 -3 L-0.3 1.5 L-4.8 6 M4.7 -7 L0.5 -3 L4.7 1.2"/></svg><svg class="ic" style="left:35.30px;top:697.00px" width="40" height="40" viewBox="-20 -20 40 40" fill="none" stroke="#d0d0d0" stroke-width="1.3" stroke-linecap="round" stroke-linejoin="round"><circle cx="-3.4" cy="-5.6" r="2"/><circle cx="3.6" cy="-3.4" r="2"/><circle cx="-3.4" cy="5.6" r="2"/><path d="M-3.4 -3.6 V3.6 M3.6 -1.4 Q3.6 1.2 0.6 1.2 H-1 Q-3.4 1.2 -3.4 3.6"/></svg><svg class="ic" style="left:222.80px;top:697.10px" width="40" height="40" viewBox="-20 -20 40 40" fill="none" stroke="#d0d0d0" stroke-width="1.35" stroke-linecap="round" stroke-linejoin="round"><path d="M-5.5 -1.6 A5.7 5.7 0 0 1 5.3 -2.2 M5.5 1.6 A5.7 5.7 0 0 1 -5.3 2.2"/><path stroke="none" fill="#c5c5c5" d="M3 -2.4 H7.8 L5.6 1.2 Z M-3 2.4 H-7.8 L-5.6 -1.2 Z"/></svg><svg class="ic" style="left:255.90px;top:697.50px" width="40" height="40" viewBox="-20 -20 40 40" fill="none" stroke="#d0d0d0" stroke-width="1.3" stroke-linecap="round" stroke-linejoin="round"><circle cx="0" cy="0" r="6.4"/><path d="M-2.5 -2.5 L2.5 2.5 M2.5 -2.5 L-2.5 2.5"/></svg><svg class="ic" style="left:287.80px;top:697.30px" width="40" height="40" viewBox="-20 -20 40 40" fill="none" stroke="#d0d0d0" stroke-width="1.3" stroke-linecap="round" stroke-linejoin="round"><path d="M0 -6.9 L6.9 5.2 H-6.9 Z"/><path d="M0 -2.6 V1.4 M0 3.3 V3.5" stroke-width="1.3"/></svg><svg class="ic" style="left:318.80px;top:697.40px" width="40" height="40" viewBox="-20 -20 40 40" fill="none" stroke="#d0d0d0" stroke-width="1.3" stroke-linecap="round" stroke-linejoin="round"><circle cx="0" cy="0" r="6.4"/><path d="M0 -0.8 V3.2 M0 -3.3 V-3.1" stroke-width="1.3"/></svg><svg class="ic" style="left:373.00px;top:697.00px" width="40" height="40" viewBox="-20 -20 40 40" fill="none" stroke="#d0d0d0" stroke-width="1.35" stroke-linecap="round" stroke-linejoin="round"><path d="M2 -4.8 V-7.3 L7.6 -3 L2 1.3 V-1.2 Q-1.2 -1.2 -3.2 0.6 M2 -4.8 Q-5.4 -4.8 -7 2.2"/><circle cx="-1.1" cy="4.6" r="2.3"/></svg><svg class="ic" style="left:476.20px;top:697.10px" width="40" height="40" viewBox="-20 -20 40 40" fill="none" stroke="#d0d0d0" stroke-width="1.3" stroke-linecap="round" stroke-linejoin="round"><circle cx="-4.5" cy="-5" r="1.9"/><circle cx="-4.5" cy="5.1" r="1.9"/><circle cx="4.5" cy="5.1" r="1.9"/><path d="M-4.5 -3.1 V3.2 M4.5 3.2 V-2.8 Q4.5 -5 2.3 -5 H0.4 M2.2 -7.2 L0 -5 L2.2 -2.8"/></svg><svg class="ic" style="left:847.50px;top:697.00px" width="40" height="40" viewBox="-20 -20 40 40" fill="none" stroke="#d0d0d0" stroke-width="1.3" stroke-linecap="round" stroke-linejoin="round"><path d="M-3.2 -6 Q-5 -6 -5 -4.2 V-2 Q-5 -0.4 -6.4 -0.2 Q-5 0 -5 1.6 V3.6 Q-5 5.4 -3.2 5.4"/><path d="M0.6 -6 Q2.4 -6 2.4 -4.2 V-2 Q2.4 -0.6 3.8 -0.2"/><circle cx="3.2" cy="4" r="2"/></svg><svg class="ic" style="left:952.00px;top:696.80px" width="40" height="40" viewBox="-20 -20 40 40" fill="none" stroke="#d0d0d0" stroke-width="1.45" stroke-linecap="round" stroke-linejoin="round"><rect x="-6.1" y="-6.5" width="5.4" height="5.4" rx="2"/><rect x="0.7" y="-6.5" width="5.4" height="5.4" rx="2"/><path d="M-6.4 -2.6 Q-7.9 -1.4 -7.9 0.8 V3.1 Q-4.4 6.7 0 6.7 Q4.4 6.7 7.9 3.1 V0.8 Q7.9 -1.4 6.4 -2.6"/><path d="M-2.3 1.8 V3.6 M2.3 1.8 V3.6"/><path d="M-7 -6.8 L7.2 6.6" stroke="#181818" stroke-width="2.6"/><path d="M-7 -6.8 L7.2 6.6" stroke-width="1.5"/></svg><svg class="ic" style="left:984.80px;top:697.00px" width="40" height="40" viewBox="-20 -20 40 40" fill="none" stroke="#d0d0d0" stroke-width="1.3" stroke-linecap="round" stroke-linejoin="round"><path d="M-7.6 0.8 L-4.4 4.4 M-3.4 1.2 L-0.6 4.4 L7.4 -4.6 M-0.2 -0.2 L3.6 -4.6"/></svg><svg class="ic" style="left:1068.70px;top:697.20px" width="40" height="40" viewBox="-20 -20 40 40" fill="none" stroke="#d0d0d0" stroke-width="1.3" stroke-linecap="round" stroke-linejoin="round"><path d="M-5.8 4 H5.8 L4.4 1.8 V-1.6 Q4.4 -6.2 0 -6.2 Q-4.4 -6.2 -4.4 -1.6 V1.8 Z"/><path d="M-1.5 4.4 Q0 6.8 1.5 4.4"/></svg>
</div>
</body>
</html>
